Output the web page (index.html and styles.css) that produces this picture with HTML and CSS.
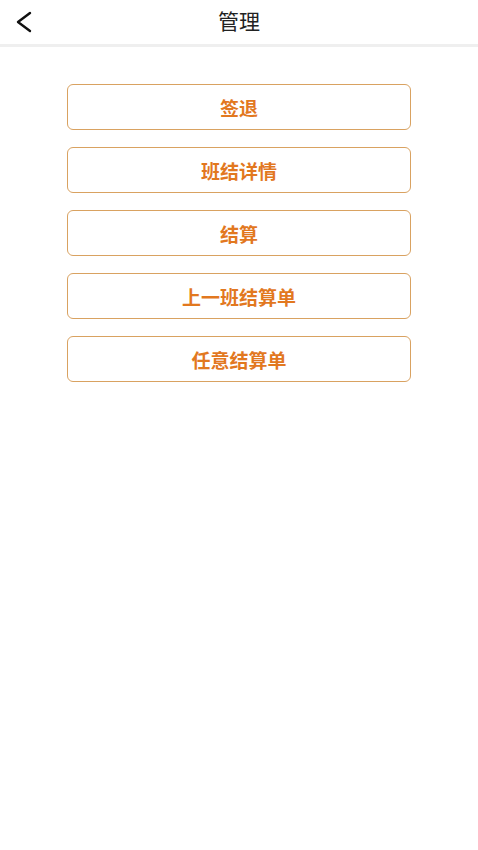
FILE: index.html
```html
<!DOCTYPE html>
<html lang="zh-CN">
<head>
    <meta charset="UTF-8">
    <meta name="viewport" content="width=device-width, initial-scale=1.0">
    <title>管理</title>
    <link rel="stylesheet" href="styles.css">
</head>
<body>
<div class="header">
    <a class="back" href="#">
        <svg width="20" height="22" viewBox="0 0 20 22">
            <path d="M16 2 L4 11 L16 20" fill="none" stroke="#111" stroke-width="2.4" stroke-linecap="round" stroke-linejoin="round"/>
        </svg>
    </a>
    <div class="title">管理</div>
</div>
<div class="menu">
    <button class="menu-btn">签退</button>
    <button class="menu-btn">班结详情</button>
    <button class="menu-btn">结算</button>
    <button class="menu-btn">上一班结算单</button>
    <button class="menu-btn">任意结算单</button>
</div>
</body>
</html>
```

FILE: styles.css
```css
body {
    margin: 0;
    background: #fff;
    font-family: "Noto Sans CJK SC", "Noto Sans", sans-serif;
}

.header {
    position: relative;
    height: 44px;
    display: flex;
    align-items: center;
    justify-content: center;
    border-bottom: 3px solid #efefef;
}

.back {
    position: absolute;
    left: 14px;
    top: 11px;
    display: flex;
}

.title {
    font-size: 21px;
    line-height: 1;
    margin-top: -4px;
    color: #222;
}

.menu {
    display: flex;
    flex-direction: column;
    align-items: center;
    gap: 17px;
    padding-top: 37px;
}

.menu-btn {
    width: 344px;
    height: 46px;
    background: #fff;
    border: 1.5px solid #d9a261;
    border-radius: 6px;
    color: #e2781f;
    font-family: inherit;
    font-size: 19px;
    font-weight: bold;
    padding: 0;
}
```
